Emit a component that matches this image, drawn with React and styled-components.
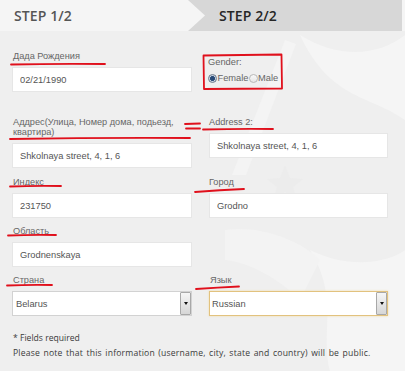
import React from "react";
import styled, { createGlobalStyle } from "styled-components";

const Global = createGlobalStyle`
  html, body { margin: 0; padding: 0; background: #f0f0f0; }
  body { font-family: "Liberation Sans", Arial, sans-serif; }
  * { box-sizing: border-box; }
`;

const Page = styled.div`
  position: relative;
  width: 405px;
  height: 371px;
  overflow: hidden;
  background: #efefef;
`;

const Watermark = styled.svg`
  position: absolute;
  left: 0;
  top: 0;
  width: 405px;
  height: 371px;
  z-index: 0;
`;

const Content = styled.div`
  position: relative;
  z-index: 1;
`;

const Header = styled.div`
  display: flex;
  height: 31px;
  background: #f5f5f5;
  padding-right: 3px;
`;

const StepTab = styled.div`
  display: flex;
  align-items: center;
  font-family: "Open Sans", "Liberation Sans", sans-serif;
  font-weight: 600;
  font-size: 14px;
  letter-spacing: 0.1px;
  color: ${(p) => (p.$active ? "#262626" : "#555")};
  background: ${(p) => (p.$active ? "#d7d7d7" : "transparent")};
  width: ${(p) => p.$w}px;
  flex: ${(p) => (p.$active ? "0 0 auto" : "1 1 auto")};
  padding-left: ${(p) => p.$pl}px;
  clip-path: ${(p) =>
    p.$active ? "polygon(0 0, 100% 0, 100% 100%, 0 100%, 17px 50%)" : "none"};
`;

const Form = styled.div`
  padding: 0 17px 0 12px;
`;

const Row = styled.div`
  display: grid;
  grid-template-columns: 180px 179px;
  column-gap: 17px;
  align-items: start;
  margin-top: ${(p) => p.$mt}px;
`;

const Field = styled.div`
  display: flex;
  flex-direction: column;
`;

const Label = styled.label`
  font-size: 9.2px;
  line-height: 10px;
  color: #666;
  margin-bottom: 6px;
  padding-left: ${(p) => p.$pl || 1}px;
`;

const TextInput = styled.input`
  height: 25px;
  width: 100%;
  border: 1px solid #e6e6e6;
  background: #fff;
  padding: 0 0 0 7px;
  font-family: "Liberation Sans", Arial, sans-serif;
  font-size: 9.3px;
  color: #555;
  outline: none;
`;

const Select = styled.div`
  height: 25px;
  display: flex;
  align-items: stretch;
  background: #fff;
  border: 1px solid ${(p) => (p.$focus ? "#e2c27e" : "#d2d2d2")};
  box-shadow: ${(p) => (p.$focus ? "0 0 2px #f2dba8" : "none")};
`;

const SelectText = styled.span`
  flex: 1;
  display: flex;
  align-items: center;
  padding-left: ${(p) => (p.$focus ? 2 : 3)}px;
  font-size: 9.3px;
  color: #555;
`;

const SelectButton = styled.span`
  width: 11px;
  display: flex;
  align-items: center;
  justify-content: center;
  border: 1px solid #a8a8a8;
  border-radius: 1px;
  background: linear-gradient(#f6f6f6, #d6d6d6);
  &::after {
    content: "";
    border-left: 2.5px solid transparent;
    border-right: 2.5px solid transparent;
    border-top: 3px solid #111;
  }
`;

const GenderBox = styled.div`
  display: flex;
  flex-direction: column;
  margin-top: 6px;
  margin-left: -1px;
  font-size: 9.3px;
  color: #666;
`;

const GenderTitle = styled.div`
  line-height: 10px;
`;

const RadioRow = styled.div`
  display: flex;
  align-items: center;
  margin-top: 6px;
  line-height: 10px;
`;

const Radio = styled.span`
  width: 9px;
  height: 9px;
  border-radius: 50%;
  border: 1px solid ${(p) => (p.$on ? "#6d7a8c" : "#b8b8b8")};
  background: ${(p) =>
    p.$on
      ? "radial-gradient(circle, #2a4b78 0 2.2px, #c9d4e2 2.6px)"
      : "linear-gradient(#f8f8f8, #e6e6e6)"};
  margin-right: 0.5px;
`;

const Footer = styled.div`
  margin-top: 15px;
  padding-left: 1px;
  font-family: "Open Sans", "Liberation Sans", sans-serif;
  font-size: 8.6px;
  line-height: 15px;
  color: #3a3a3a;
`;

const Note = styled.div`
  letter-spacing: ${(p) => p.$ls || 0}px;
  word-spacing: ${(p) => p.$ws || 0}px;
  white-space: nowrap;
`;

const Marks = styled.svg`
  position: absolute;
  left: 0;
  top: 0;
  width: 405px;
  height: 371px;
  z-index: 2;
  pointer-events: none;
`;

const Mark = styled.path`
  fill: none;
  stroke: #e0101c;
  stroke-width: 1.8;
  stroke-linecap: round;
  stroke-linejoin: round;
`;

function InputField({ label, value, pl }) {
  return (
    <Field>
      <Label $pl={pl}>{label}</Label>
      <TextInput defaultValue={value} readOnly />
    </Field>
  );
}

function SelectField({ label, value, focus, pl }) {
  return (
    <Field>
      <Label $pl={pl}>{label}</Label>
      <Select $focus={focus}>
        <SelectText $focus={focus}>{value}</SelectText>
        <SelectButton />
      </Select>
    </Field>
  );
}

export default function App() {
  return (
    <Page>
      <Global />
      <Watermark viewBox="0 0 405 371">
        <path d="M300 35 C340 60 380 55 405 35 L405 120 C370 95 330 100 300 35 Z" fill="#f5f5f5" />
        <path d="M232 175 L285 40 L296 44 L246 175 Z" fill="#f4f4f4" />
        <path d="M285 165 L290 178 L303 179 L293 187 L297 200 L285 192 L273 200 L277 187 L267 179 L280 178 Z" fill="#ececec" />
        <path d="M310 250 C350 270 390 262 405 250 L405 371 L330 371 C320 330 340 300 310 250 Z" fill="#f5f5f5" />
        <path d="M225 230 C260 225 300 240 320 260 L300 300 C280 280 250 262 225 260 Z" fill="#f3f3f3" />
      </Watermark>
      <Content>
        <Header>
          <StepTab $pl={14}>STEP 1/2</StepTab>
          <StepTab $active $w={214} $pl={31}>STEP 2/2</StepTab>
        </Header>
        <Form>
          <Row $mt={20}>
            <InputField label="Дада Рождения" value="02/21/1990" />
            <GenderBox>
              <GenderTitle>Gender:</GenderTitle>
              <RadioRow>
                <Radio $on />
                <span>Female</span>
                <Radio />
                <span>Male</span>
              </RadioRow>
            </GenderBox>
          </Row>
          <Row $mt={25}>
            <InputField
              label="Аддрес(Улица, Номер дома, подьезд, квартира)"
              value="Shkolnaya street, 4, 1, 6"
            />
            <InputField label="Address 2:" value="Shkolnaya street, 4, 1, 6" pl={-3} />
          </Row>
          <Row $mt={9}>
            <InputField label="Индекс" value="231750" />
            <InputField label="Город" value="Grodno" pl={-1} />
          </Row>
          <Row $mt={8}>
            <InputField label="Область" value="Grodnenskaya" />
          </Row>
          <Row $mt={8}>
            <SelectField label="Страна" value="Belarus" />
            <SelectField label="Язык" value="Russian" focus pl={1} />
          </Row>
          <Footer>
            <Note>* Fields required</Note>
            <Note $ls={0.2} $ws={1}>
              Please note that this information (username, city, state and country) will be public.
            </Note>
          </Footer>
        </Form>
      </Content>
      <Marks viewBox="0 0 405 371">
        <Mark d="M11 64.5 Q55 63.5 105 64" />
        <Mark d="M203.5 55.5 L281.5 54.5 L282 88.5 L204 89 Z" />
        <Mark d="M10 139 Q100 137.5 190 138" />
        <Mark d="M185 124 L200 123.5" />
        <Mark d="M186 128.5 L200 128.5" />
        <Mark d="M203 129.5 Q240 128.5 273 129" />
        <Mark d="M10 186.5 Q35 185.5 61 186" />
        <Mark d="M195 192 Q220 190 244 189" />
        <Mark d="M8 235.5 Q32 234.5 56 235" />
        <Mark d="M7 285.5 Q30 284.5 52 285" />
        <Mark d="M196 289 Q218 287.5 239 286.5" />
      </Marks>
    </Page>
  );
}
